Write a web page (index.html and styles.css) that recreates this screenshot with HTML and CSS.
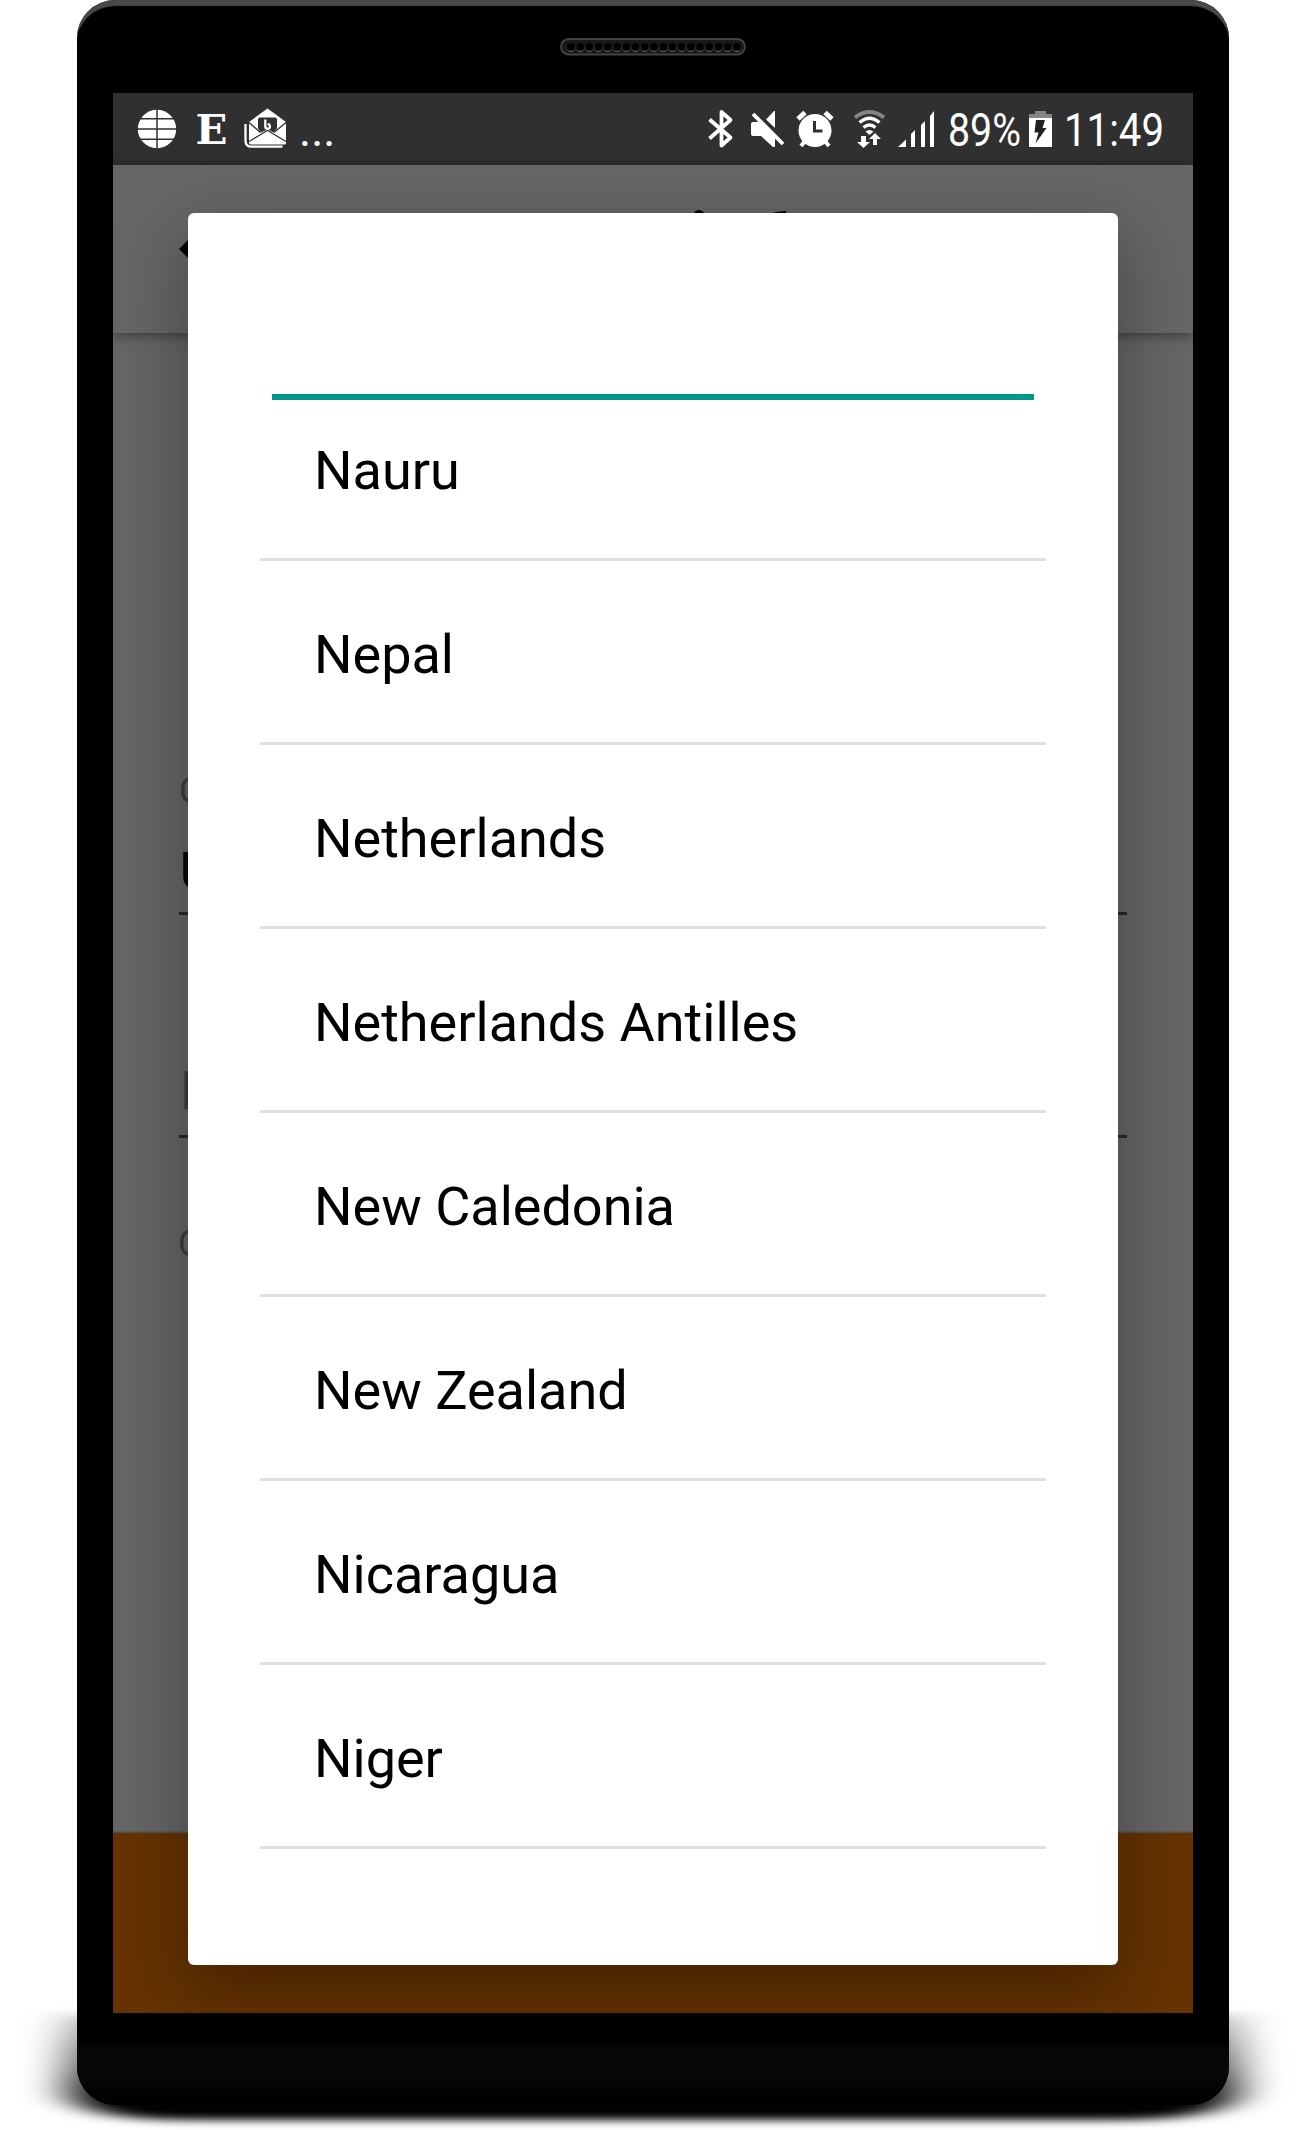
FILE: index.html
```html
<!DOCTYPE html>
<html lang="en">
<head>
<meta charset="utf-8">
<title>Select country</title>
<link rel="stylesheet" href="styles.css">
</head>
<body>
<div class="stage">
  <svg class="ground-shadow" width="1305" height="140" viewBox="0 1990 1305 140" aria-hidden="true">
    <defs>
      <linearGradient id="fade" x1="0" y1="0" x2="0" y2="1">
        <stop offset="0" stop-color="#000" stop-opacity=".2"/>
        <stop offset=".5" stop-color="#000" stop-opacity=".65"/>
        <stop offset=".85" stop-color="#000"/>
      </linearGradient>
      <filter id="soft" x="-10%" y="-30%" width="120%" height="160%"><feGaussianBlur stdDeviation="22 4"/></filter>
    </defs>
    <path d="M66 2014H1240V2085Q1240 2120 1120 2120H186Q66 2120 66 2085Z" fill="url(#fade)" filter="url(#soft)"/>
  </svg>
  <div class="phone">
    <div class="forehead">
      <svg width="186" height="18" viewBox="0 0 186 18" aria-hidden="true">
        <defs>
          <pattern id="holes" x="6.4" y="0" width="9.22" height="18" patternUnits="userSpaceOnUse">
            <circle cx="4.6" cy="9.9" r="4" fill="#666"/><circle cx="4.6" cy="8.9" r="3.9" fill="#000"/>
          </pattern>
        </defs>
        <rect x="1" y="1" width="184" height="15.5" rx="7.7" fill="#191919" stroke="#444" stroke-width="1.8"/>
        <rect x="6.4" y="0" width="175.2" height="18" fill="url(#holes)"/>
      </svg>
    </div>
    <div class="screen">
      <div class="status">
        <svg width="1080" height="72" viewBox="113 93 1080 72">
          <g fill="#fff">
            <circle cx="157" cy="129" r="19.2"/>
            <path d="M157 109v40M137 118.7h40M137 129h40M137 139.3h40" stroke="#303030" stroke-width="1.5"/>
            <text class="serif" x="195.500" y="144" textLength="32" lengthAdjust="spacingAndGlyphs">E</text>
            <path d="M267.500 108.500L286 122V143Q286 144.500 284.500 144.500H251Q249 144.500 249 142.500V122Z"/>
            <path d="M258 119.500q0-2 2-2h15q2 0 2 2v9l-3.500 4-6-3-6.500 3-3-4Z" fill="#303030"/>
            <path d="M249 122.500L260.500 132.500M286 122.500L274 132.500M249 141.500L267.500 130.500L286 141.500" fill="none" stroke="#303030" stroke-width="1.300"/>
            <path d="M267.500 131.500L284 142H251Z"/>
            <path d="M265.300 119.500v7m0 0a2.300 2.300 0 1 0 2.300-2.300" fill="none" stroke="#fff" stroke-width="2.300"/>
            <path d="M245.500 124v16.500q0 6.200 6 6.200h31" fill="none" stroke="#fff" stroke-width="2.300"/>
            <text class="dots" x="299" y="146">...</text>
            <path d="M709.500 119.500L730.500 137.500L721.500 145.500V112L730.500 120L709.500 138.500" fill="none" stroke="#fff" stroke-width="3.800" stroke-linejoin="round"/>
            <path d="M751 124q0-2 2-2h8l14 14v11h-2l-12-11h-8q-2 0-2-2ZM766 119.500L774 111h1v17Z"/>
            <path d="M753 114L783 144" stroke="#fff" stroke-width="3.800"/>
            <circle cx="815" cy="130.500" r="16.500"/>
            <path d="M798 119l7-6.500M832 119l-7-6.500" stroke="#fff" stroke-width="5"/>
            <path d="M805 141l-4 5M825 141l4 5" stroke="#fff" stroke-width="4"/>
            <path d="M814.500 121v10h8" fill="none" stroke="#303030" stroke-width="3"/>
            <path d="M855 117.500q14.500-11 29 0" fill="none" stroke="#858585" stroke-width="4"/>
            <path d="M859.500 122.500q10-8.500 20 0M863.500 127.500q6-5 12 0" fill="none" stroke="#fff" stroke-width="3.300"/>
            <path d="M865.500 131.500q4-3 8 0l-4 3.500Z"/>
            <path d="M861 136h5v6h4l-6.500 6-6.500-6h4ZM873 145v-6h-4l6-6 6 6h-4v6Z"/>
            <path d="M898 147l8-7.500v7.500ZM911 134l4-4v17h-4ZM921 125l4-4v26h-4ZM930 116l4-5v36h-4Z"/>
            <text class="num" x="948" y="146" textLength="73" lengthAdjust="spacingAndGlyphs">89%</text>
            <path d="M1035 111h11v3h6v4h-23v-4h6Z" fill="#858585"/>
            <path d="M1029 118h23v29h-23Z"/>
            <path d="M1036 120h9l-2.500 8h4l-11 15.500 3-11h-4Z" fill="#202020"/>
            <text class="num" x="1064" y="146" textLength="100" lengthAdjust="spacingAndGlyphs">11:49</text>
          </g>
        </svg>
      </div>
      <div class="appbar">
        <svg width="1080" height="168" viewBox="113 165 1080 168" aria-hidden="true">
          <path d="M179 249L196 232V266Z"/><circle cx="699" cy="215.500" r="5.500"/><path d="M774 212.500q5-1.500 12-1.500v4h-12Z"/>
        </svg>
      </div>
      <div class="form">
        <div class="caption">C</div>
        <div class="field value">U</div>
        <div class="field hint">P</div>
        <div class="caption note">C</div>
      </div>
      <div class="action"></div>
      <div class="dialog">
        <div class="search"></div>
        <div class="list">
          <div class="row">Nauru</div>
          <div class="row">Nepal</div>
          <div class="row">Netherlands</div>
          <div class="row">Netherlands Antilles</div>
          <div class="row">New Caledonia</div>
          <div class="row">New Zealand</div>
          <div class="row">Nicaragua</div>
          <div class="row">Niger</div>
        </div>
      </div>
    </div>
    <div class="chin"></div>
  </div>
</div>
</body>
</html>
```
FILE: styles.css
```css
* { box-sizing: border-box; }
body { margin: 0; background: #fff; font-family: Roboto, sans-serif; }
.stage { position: relative; width: 1305px; height: 2130px; overflow: hidden; padding-left: 77px; }
.ground-shadow { position: absolute; left: 0; bottom: 0; }
.phone {
  position: relative; width: 1152px; height: 2105px; padding: 0 36px;
  display: flex; flex-direction: column;
  background: #000; border-radius: 38px; overflow: hidden;
  box-shadow: inset 0 7px 1px -1px #494949;
}
.forehead { height: 93px; flex: none; display: flex; justify-content: center; padding-top: 38px; }
.screen {
  position: relative; width: 1080px; height: 1920px; flex: none; overflow: hidden;
  display: flex; flex-direction: column; background: #666;
}
.status { height: 72px; background: #303030; flex: none; }
.status svg, .appbar svg { display: block; }
.serif { font: bold 41px "DejaVu Serif", serif; }
.dots { font: 46px Roboto, sans-serif; }
.num { font: 46px Roboto, sans-serif; }
.appbar { height: 168px; flex: none; background: #666; box-shadow: 0 2px 12px rgba(0,0,0,.45); z-index: 1; }
.form { flex: 1; padding: 438px 66px 0; color: #3d3d3d; }
.caption { font-size: 36px; line-height: 40px; height: 60px; }
.field { border-bottom: 3px solid #292929; font-size: 54px; padding-left: 1px; }
.value { height: 84px; line-height: 64px; padding-top: 9px; font-size: 51px; font-weight: 500; color: #080808; }
.hint { height: 223px; padding-top: 144px; line-height: 64px; }
.note { padding-top: 86px; margin-left: -1px; }
.action { height: 180px; flex: none; background: #630; box-shadow: 0 -1px 2px rgba(0,0,0,.3); }
.dialog {
  position: absolute; left: 75px; top: 120px; width: 930px; height: 1752px; z-index: 2;
  background: #fff; border-radius: 6px; padding: 0 72px;
  box-shadow: 0 26px 72px rgba(0,0,0,.34);
}
.search { height: 187px; margin: 0 12px; border-bottom: 6px solid #009688; }
.list { display: flex; flex-direction: column; }
.row {
  height: 184px; padding: 62px 54px 0; border-bottom: 3px solid #dfdfdf;
  font-size: 54px; line-height: 64px; color: #000;
}
.row:first-child { height: 161px; padding-top: 39px; }
.chin { height: 58px; margin: 34px -36px 0; background: linear-gradient(#060606, #080808 35%, #000); }
```
